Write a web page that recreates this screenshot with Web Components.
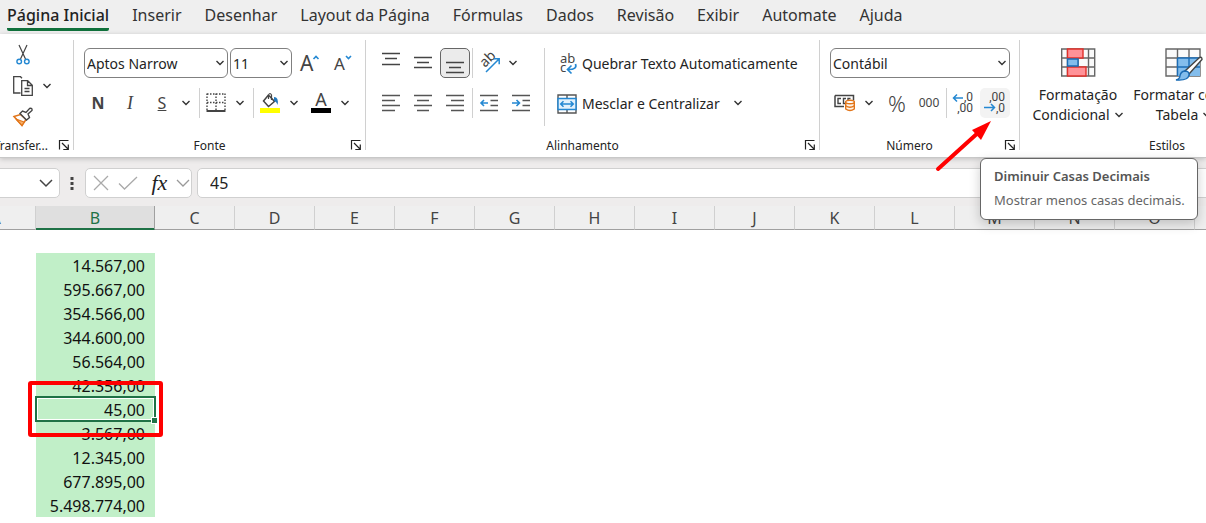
<!DOCTYPE html>
<html lang="pt-BR">
<head>
<meta charset="utf-8">
<title>Planilha</title>
<style>
html,body{margin:0;background:#fff;overflow-x:hidden}
body{font-family:"Noto Sans","Open Sans",sans-serif;font-size:14px;color:#242424;min-height:100vh}
</style>
</head>
<body>
<sheet-app></sheet-app>
<script>
const icons = {
  chev: [10,6,'<path d="M1.5 1l3.5 3.5L8.500 1" stroke="#333" stroke-width="1.400"/>'],
  chevwide: [14,8,'<path d="M1 1l6 6 6-6" stroke="#444" stroke-width="1.500"/>'],
  chevgray: [14,8,'<path d="M1 1l6 6 6-6" stroke="#999" stroke-width="1.300"/>'],
  launch: [10,10,'<path d="M.5 9.500V.5H9.500M3 3l6 6M9.300 4.500v5h-5" stroke="#222" stroke-width="1.200"/>'],
  cut: [14,20,'<path d="M3 0l6.500 14M11 0L4.500 14" stroke="#444" stroke-width="1.200"/><circle cx="3.200" cy="16.500" r="2.300" stroke="#2488d2" stroke-width="1.400"/><circle cx="10.800" cy="16.500" r="2.300" stroke="#2488d2" stroke-width="1.400"/>'],
  copy: [20,20,'<path d="M7.500 17H.7V.7H7.500l1.500 1.500M8.700 4.700h6l4.600 4.600v10H8.700zM14.500 5v4.500H19M11.500 12.500h5M11.500 15.500h5" stroke="#444" stroke-width="1.300"/>'],
  brush: [20,20,'<path d="M1 9.500l6.500-2L13 12.500 9 18.500z" fill="#fff" stroke="#e2761b" stroke-width="1.500"/><path d="M3 12l8 3-2 3.500z" fill="#f9b26b" stroke="#e2761b" stroke-width="1.200"/><path d="M7 6.500L9.500 4l3.500 1.500 3.500-4q3-1 2.500 2L15 7l1.500 3.500L13.500 13z" fill="#fff" stroke="#444" stroke-width="1.400"/>'],
  grow: [20,18,'<text x="0" y="17" font-size="21" fill="#444">A</text><path d="M13.500 5l2.500-2.500L18.500 5" stroke="#2488d2" stroke-width="1.600"/>'],
  shrink: [20,18,'<text x="0" y="16" font-size="17" fill="#444">A</text><path d="M12 2l2.500 2.500L17 2" stroke="#2488d2" stroke-width="1.600"/>'],
  borders: [20,20,'<path d="M1 1h18M1 9.500h18M1 .5v17M10 .5v17M19 .5v17" stroke="#444" stroke-width="1.400" stroke-dasharray="1.500 1.500"/><path d="M.5 18h19" stroke="#444" stroke-width="2"/>'],
  fill: [20,20,'<path d="M8.500 2L3.500 8l5 5.500 6-5L9 2.500" stroke="#444" stroke-width="1.500"/><path d="M8.500 6V2q1.500-3 3 0v5" stroke="#444" stroke-width="1.200"/><path d="M14 4q5 0 3.500 8-1-3.500-3.500-4z" fill="#2278bd"/><path d="M0 15h20v5H0z" fill="#ff0"/>'],
  fontcolor: [20,20,'<text x="10" y="13" text-anchor="middle" font-size="18" fill="#444">A</text><path d="M0 15h20v5H0z" fill="#000"/>'],
  vtop: [18,20,'<path d="M0 .5h18M3 5.500h12M0 11.500h18" stroke="#444" stroke-width="1.500"/>'],
  vmid: [18,20,'<path d="M0 4.500h18M3 9.500h12M0 14.500h18" stroke="#444" stroke-width="1.500"/>'],
  vbot: [18,20,'<path d="M0 9.500h18M3 14.500h12M0 19.500h18" stroke="#444" stroke-width="1.500"/>'],
  left: [18,18,'<path d="M0 1.500h18M0 6.500h13M0 11.500h18M0 16.500h13" stroke="#555" stroke-width="1.500"/>'],
  center: [18,18,'<path d="M0 1.500h18M3 6.500h12M0 11.500h18M3 16.500h12" stroke="#555" stroke-width="1.500"/>'],
  right: [18,18,'<path d="M0 1.500h18M5 6.500h13M0 11.500h18M5 16.500h13" stroke="#555" stroke-width="1.500"/>'],
  orient: [20,20,'<text x="0" y="0" font-size="14" fill="#444" transform="translate(6 15) rotate(-45)">ab</text><path d="M7 19L20 6M14.500 5.700h5.700v5.500" stroke="#2488d2" stroke-width="1.500"/>'],
  outdent: [18,18,'<path d="M0 1.500h18M10.500 6.500H18M10.500 11.500H18M0 16.500h18" stroke="#555" stroke-width="1.500"/><path d="M8 9H1.500M4 6L1 9l3 3" stroke="#2488d2" stroke-width="1.600"/>'],
  indent: [18,18,'<path d="M0 1.500h18M10.500 6.500H18M10.500 11.500H18M0 16.500h18" stroke="#555" stroke-width="1.500"/><path d="M0 9h7M4.500 6l3 3-3 3" stroke="#2488d2" stroke-width="1.600"/>'],
  wrap: [20,20,'<text x="3" y="9" font-size="13" fill="#444">ab<tspan x="3" y="18">c</tspan></text><path d="M18.500 10q2 5.500-7 5.500M14.500 11.500l-4 4 4 4" stroke="#2488d2" stroke-width="1.700"/>'],
  merge: [20,20,'<path d="M1 1h18v18H1zM10 1v4M10 15v4" stroke="#555" stroke-width="1.400"/><path d="M1 4.500h18v11H1z" fill="#e2f1fc" stroke="#2488d2" stroke-width="1.500"/><path d="M4 10h12M6.500 7.200L3.700 10l2.800 2.800M13.500 7.200l2.800 2.800-2.800 2.800" stroke="#2488d2" stroke-width="1.500"/>'],
  money: [22,18,'<path d="M1 1.500h18.500v5M1 1.500v11h9" stroke="#444" stroke-width="1.500"/><path d="M7 4.500H4v5h3M12 4.500H9.500v5H11M14 7V4.500h2.500" stroke="#444" stroke-width="1.400"/><path d="M11.700 8v7q4.300 3 8.600 0V8z" fill="#fff4e8" stroke="#e2761b" stroke-width="1.400"/><ellipse cx="16" cy="8" rx="4.300" ry="1.800" fill="#fff" stroke="#e2761b" stroke-width="1.400"/><path d="M11.700 11.700q4.300 3 8.600 0" stroke="#e2761b" stroke-width="1.400"/>'],
  more: [22,22,'<g font-family="Roboto" font-size="12" fill="#444"><text x="21" y="9" text-anchor="end">,0</text><text x="21" y="20" text-anchor="end">,00</text></g><path d="M11 6H1.500M5 2.500L1.500 6 5 9.500" stroke="#2488d2" stroke-width="1.500"/>'],
  less: [22,22,'<g font-family="Roboto" font-size="12" fill="#444"><text x="21" y="9" text-anchor="end">,00</text><text x="21" y="20" text-anchor="end">,0</text></g><path d="M0 15.500h10M7 12l3.500 3.500L7 19" stroke="#2488d2" stroke-width="1.500"/>'],
  cond: [34,30,'<path d="M.7 1h33v27H.7zM.7 10h33M.7 19h33M6.500 1v27M17 1v27M27.500 1v27" fill="#fafafa" stroke="#666" stroke-width="1.400"/><path d="M6.500 1h15.500v9H6.500zM6.500 19h18.500v9H6.500z" fill="#ff9298" stroke="#e0302a" stroke-width="1.400"/><path d="M6.500 11H17v7H6.500z" fill="#83bdec" stroke="#1b6cb5" stroke-width="1.400"/>'],
  table: [38,34,'<path d="M1 1h34v27H1zM1 10h34M1 19h34M12.500 1v27M24 1v27" fill="#fafafa" stroke="#666" stroke-width="1.400"/><path d="M12.500 10H35v18H12.500z" fill="#83bdec"/><path d="M12.500 10H35M12.500 19H35M12.500 10v18M24 10v18" stroke="#1b6cb5" stroke-width="1.400"/><path d="M34 10q3-2 3 1.500L24 26l-4-3z" fill="#fff" stroke="#444" stroke-width="1.400"/><path d="M19.500 23q5 0 4.500 4-1 6-13 5 4-1 4-4.500 1-4 4.500-4.500z" fill="#83bdec" stroke="#1b6cb5" stroke-width="1.400"/>'],
  cancel: [16,16,'<path d="M1 1l14 14M15 1L1 15" stroke="#aaa" stroke-width="1.300"/>'],
  ok: [20,14,'<path d="M1 7.500L6.500 13 19 1" stroke="#aaa" stroke-width="1.300"/>'],
  dots: [4,14,'<path d="M.5 1h3v3h-3zM.5 6h3v3h-3zM.5 11h3v3h-3z" fill="#444"/>']
};

class UiIcon extends HTMLElement {
  connectedCallback(){
    const [w,h,d] = icons[this.getAttribute('name')];
    this.attachShadow({mode:'open'}).innerHTML =
      `<style>:host{display:inline-flex;flex:none}svg{display:block;overflow:visible}</style>
       <svg width="${w}" height="${h}" viewBox="0 0 ${w} ${h}" fill="none" aria-hidden="true">${d}</svg>`;
  }
}

class RibbonButton extends HTMLElement {
  connectedCallback(){
    const label = this.getAttribute('label');
    this.attachShadow({mode:'open'}).innerHTML =
      `<style>
        :host{display:flex;flex:none;margin:0 1px;position:relative}
        button{all:unset;box-sizing:border-box;width:30px;height:30px;border-radius:5px;display:flex;align-items:center;justify-content:center;font-size:16px;line-height:20px;color:#444}
        :host([kind=chev]){margin:0}
        :host([kind=chev]) button{width:16px}
        :host([kind=text]){margin:0}
        :host([kind=text]) button{width:auto;font-size:14px;gap:5px;color:#242424;padding-top:1px}
        :host([pressed]) button{background:#ebebeb;border:1px solid #666}
        :host([hovered]) button{background:#f3f3f3}
      </style>
      <button type="button"${label?` aria-label="${label}"`:''}><slot></slot></button><slot name="tip"></slot>`;
  }
}

class BigButton extends HTMLElement {
  connectedCallback(){
    this.attachShadow({mode:'open'}).innerHTML =
      `<style>
        :host{display:block;flex:none}
        button{all:unset;display:flex;width:100%;flex-direction:column;align-items:center;font-size:14px;line-height:20px;white-space:nowrap}
        .icon{height:37px}
        .row{display:flex;align-items:center;gap:4px}
      </style>
      <button type="button"><span class="icon"><slot name="icon"></slot></span><span><slot name="top"></slot></span><span class="row"><slot></slot><ui-icon name="chev"></ui-icon></span></button>`;
  }
}

class UiSelect extends HTMLElement {
  connectedCallback(){
    this.attachShadow({mode:'open'}).innerHTML =
      `<style>
        :host{display:grid;flex:none;align-items:center}
        select{grid-area:1/1;appearance:none;box-sizing:border-box;width:100%;height:30px;margin:0;padding:0 20px 0 2px;border:1px solid #808080;border-radius:6px;background:#fff;font:inherit;font-size:14px;color:#242424}
        ui-icon{grid-area:1/1;justify-self:end;margin-right:3px;pointer-events:none}
      </style>
      <select aria-label="${this.getAttribute('label')}"><option>${this.getAttribute('value')}</option></select><ui-icon name="chev"></ui-icon>`;
  }
}

class RibbonGroup extends HTMLElement {
  connectedCallback(){
    const launcher = this.hasAttribute('launcher');
    this.attachShadow({mode:'open'}).innerHTML =
      `<style>
        :host{display:flex;flex:none;flex-direction:column;justify-content:space-between;box-sizing:border-box;min-height:110px;border-right:1px solid #d0d0d0}
        .body{padding-top:8px}
        :host([clipped]) .body{padding-top:0}
        footer{display:flex;align-items:center;height:10px;font-size:12px;line-height:16px}
        .name{flex:1;min-width:0;display:flex;justify-content:center;white-space:nowrap;padding-top:2px}
        :host([launcher]) footer{padding-right:4px}
        :host([launcher]) .name{margin-right:6px}
        :host([clipped]) .name{justify-content:flex-end;margin-right:11px}
        button{all:unset;display:flex}
      </style>
      <div class="body"><slot></slot></div>
      <footer><span class="name">${this.getAttribute('label')}</span>${launcher?'<button type="button" aria-label="Mais opções"><ui-icon name="launch"></ui-icon></button>':''}</footer>`;
  }
}

class RibbonTabs extends HTMLElement {
  connectedCallback(){
    const tabs=['Página Inicial','Inserir','Desenhar','Layout da Página','Fórmulas','Dados','Revisão','Exibir','Automate','Ajuda'];
    this.attachShadow({mode:'open'}).innerHTML =
      `<style>
        :host{display:block;background:#efefef}
        nav{display:flex;gap:23px;height:34px;padding-left:7px;box-sizing:border-box;white-space:nowrap}
        a{color:#333;text-decoration:none;font-size:16px;line-height:22px;padding-top:4px;height:24px}
        a.on{font-weight:500;color:#222;border-bottom:3px solid #0f703b;border-radius:0 0 2px 2px}
      </style>
      <nav>${tabs.map((t,i)=>`<a href="#"${i?'':' class="on" aria-current="page"'}>${t}</a>`).join('')}</nav>`;
  }
}

class ScreenTip extends HTMLElement {
  connectedCallback(){
    this.attachShadow({mode:'open'}).innerHTML =
      `<style>
        :host{display:block;position:absolute;top:70px;left:0;box-sizing:border-box;width:218px;padding:7px 13px 9px;background:#fff;border:1px solid #666;border-radius:6px;box-shadow:0 4px 12px rgba(0,0,0,.2);font-size:13px;line-height:20px;color:#666;white-space:nowrap;z-index:3}
        strong,span{display:block}
        strong{font-weight:600;color:#555}
        span{margin-top:4px}
      </style><strong><slot name="title"></slot></strong><span><slot></slot></span>`;
  }
}

class PointerArrow extends HTMLElement {
  connectedCallback(){
    this.attachShadow({mode:'open'}).innerHTML =
      `<style>:host{display:block;position:absolute;top:32px;right:18px;z-index:4;pointer-events:none}svg{display:block}</style>
      <svg width="58" height="52" viewBox="0 0 58 52" aria-hidden="true"><path d="M4 49L46 11" stroke="#f00" stroke-width="4" stroke-linecap="round"/><path d="M57 1L38 10l9 10z" fill="#f00"/></svg>`;
  }
}

class RibbonBar extends HTMLElement {
  connectedCallback(){
    const b=(n,l,x='')=>`<ribbon-button label="${l}" ${x}><ui-icon name="${n}"></ui-icon></ribbon-button>`;
    const c=l=>`<ribbon-button kind="chev" label="${l}"><ui-icon name="chev"></ui-icon></ribbon-button>`;
    this.attachShadow({mode:'open'}).innerHTML =
      `<style>
        :host{display:flex;background:#fff;padding:6px 0 7px;border-bottom:1px solid #c8c8c8;box-shadow:0 1px 5px rgba(0,0,0,.2);position:relative;z-index:2}
        .row{display:flex;align-items:center;height:30px}
        .stack{display:flex;flex-direction:column;gap:10px}
        .clip{display:flex;flex-direction:column;gap:1px;padding-left:7px}
        i.sep{flex:none;width:1px;height:30px;background:#d0d0d0;margin-left:5px}
        i.near{margin-left:1px}
        i.tall{height:78px;margin-left:7px}
        .clipboard{width:74px}
        .font{width:292px}
        .font .stack{padding-left:8px}
        .font .top{padding-left:2px;gap:2px}
        .name{width:144px}.size{width:62px}
        .align{width:454px}
        .align .cols{display:flex;padding-left:9px}
        .align .text{padding-left:12px}
        .num{width:200px}
        .num .stack{padding-left:9px}
        .format{width:180px;margin-left:1px}
        .gap{margin-left:4px}
        .gap.wide{margin-left:5px}
        .styles{width:295px}
        .styles .big{display:flex;padding-left:6px}
        .cf{width:104px}.ft{width:108px}
        .more{margin-left:10px}
        b{font-weight:700}
        .it{font-family:"Liberation Serif",serif;font-style:italic;font-size:18px}
        .pct{font-size:22px;font-weight:300}.mil{font-size:12px}
      </style>
      <ribbon-group class="clipboard" label="Transfer..." launcher clipped>
        <div class="clip"><div class="row">${b('cut','Recortar')}</div><div class="row">${b('copy','Copiar')}${c('Opções de cópia')}</div><div class="row">${b('brush','Pincel de formatação')}</div></div>
      </ribbon-group>
      <ribbon-group class="font" label="Fonte" launcher>
        <div class="stack">
          <div class="row top"><ui-select class="name" label="Nome da fonte" value="Aptos Narrow"></ui-select><ui-select class="size" label="Tamanho da fonte" value="11"></ui-select>${b('grow','Aumentar fonte')}${b('shrink','Diminuir fonte')}</div>
          <div class="row"><ribbon-button><b>N</b></ribbon-button><ribbon-button><span class="it">I</span></ribbon-button><ribbon-button><u>S</u></ribbon-button>${c('Sublinhado')}<i class="sep"></i>${b('borders','Bordas')}${c('Opções de bordas')}<i class="sep"></i>${b('fill','Cor de preenchimento')}${c('Cores de preenchimento')}<ribbon-button class="gap" label="Cor da fonte"><ui-icon name="fontcolor"></ui-icon></ribbon-button>${c('Cores da fonte')}</div>
        </div>
      </ribbon-group>
      <ribbon-group class="align" label="Alinhamento" launcher>
        <div class="cols">
          <div class="stack">
            <div class="row">${b('vtop','Alinhar em cima')}${b('vmid','Alinhar no meio')}${b('vbot','Alinhar embaixo','pressed')}<i class="sep near"></i>${b('orient','Orientação')}${c('Opções de orientação')}</div>
            <div class="row">${b('left','Alinhar à esquerda')}${b('center','Centralizar')}${b('right','Alinhar à direita')}<i class="sep near"></i>${b('outdent','Diminuir recuo')}${b('indent','Aumentar recuo')}</div>
          </div>
          <i class="sep tall"></i>
          <div class="stack text">
            <div class="row"><ribbon-button kind="text"><ui-icon name="wrap"></ui-icon>Quebrar Texto Automaticamente</ribbon-button></div>
            <div class="row"><ribbon-button kind="text"><ui-icon name="merge"></ui-icon>Mesclar e Centralizar</ribbon-button><ribbon-button class="more" kind="chev" label="Opções de mesclagem"><ui-icon name="chev"></ui-icon></ribbon-button></div>
          </div>
        </div>
      </ribbon-group>
      <ribbon-group class="num" label="Número" launcher>
        <div class="stack">
          <div class="row"><ui-select class="format" label="Formato de número" value="Contábil"></ui-select></div>
          <div class="row">${b('money','Formato de contabilização')}${c('Moedas')}<ribbon-button class="gap wide"><span class="pct">%</span></ribbon-button><ribbon-button><span class="mil">000</span></ribbon-button><i class="sep near"></i>${b('more','Aumentar casas decimais')}
            <ribbon-button hovered label="Diminuir casas decimais"><ui-icon name="less"></ui-icon><screen-tip slot="tip"><span slot="title">Diminuir Casas Decimais</span>Mostrar menos casas decimais.</screen-tip><pointer-arrow slot="tip"></pointer-arrow></ribbon-button></div>
        </div>
      </ribbon-group>
      <ribbon-group class="styles" label="Estilos">
        <div class="big"><big-button class="cf"><ui-icon slot="icon" name="cond"></ui-icon><span slot="top">Formatação</span>Condicional</big-button><big-button class="ft"><ui-icon slot="icon" name="table"></ui-icon><span slot="top">Formatar como</span>Tabela</big-button></div>
      </ribbon-group>`;
  }
}

class FormulaBar extends HTMLElement {
  connectedCallback(){
    this.attachShadow({mode:'open'}).innerHTML =
      `<style>
        :host{display:flex;align-items:center;padding:10px 0 8px;background:#eeecec}
        .box{box-sizing:border-box;height:30px;border:1px solid #d0d0d0;border-radius:5px;background:#fff;display:flex;align-items:center}
        .name{width:70px;margin-left:-10px;justify-content:flex-end;padding-right:6px}
        ui-icon.dots{margin:0 11px 0 10px}
        .tools{width:107px;justify-content:space-between;padding:0 1px 0 7px}
        button{all:unset;display:flex}
        .fx{font:italic 22px/24px "Liberation Serif",serif;color:#222;padding-left:5px}
        input{flex:1;min-width:0;margin:0 -8px 0 5px;padding:0 12px;font:inherit;font-size:16px;color:#222;outline:0}
      </style>
      <div class="box name"><button type="button" aria-label="Caixa de nome"><ui-icon name="chevwide"></ui-icon></button></div>
      <ui-icon class="dots" name="dots"></ui-icon>
      <div class="box tools"><button type="button" aria-label="Cancelar"><ui-icon name="cancel"></ui-icon></button><button type="button" aria-label="Inserir"><ui-icon name="ok"></ui-icon></button><button type="button" class="fx">fx</button><button type="button" aria-label="Mais funções"><ui-icon name="chevgray"></ui-icon></button></div>
      <input class="box" type="text" aria-label="Barra de fórmulas" value="45">`;
  }
}

class SheetGrid extends HTMLElement {
  connectedCallback(){
    const cols='ABCDEFGHIJKLMNOP'.split('');
    const vals=['14.567,00','595.667,00','354.566,00','344.600,00','56.564,00','42.356,00','45,00','3.567,00','12.345,00','677.895,00','5.498.774,00'];
    const rest='<td></td>'.repeat(cols.length-2);
    this.attachShadow({mode:'open'}).innerHTML =
      `<style>
        :host{display:block;overflow:hidden}
        table{border-collapse:separate;border-spacing:0;table-layout:fixed;width:1319px;margin-left:-44px}
        col{width:80px}col.b{width:119px}
        th{box-sizing:border-box;height:24px;padding:0;font-size:16px;line-height:20px;font-weight:400;color:#444;background:#efefef;border-right:1px solid #d0d0d0;border-bottom:1px solid #a0a0a0}
        th.on{background:#dfdfdf;color:#1f7246;border-bottom-color:#1f7246;box-shadow:inset 0 -1px #1f7246;border-right-color:#a0a0a0}
        td{box-sizing:border-box;height:24px;padding:2px 0 0;font-size:16px;line-height:22px;text-align:right;color:#111}
        tr.blank td{height:23px;padding:0}
        td.v{background:#c1efc8;padding-right:10px}
        td.sel{position:relative}
        .cursor{position:absolute;inset:-1px;border:2px solid #1f7246;box-shadow:inset 0 0 0 1px #fff}
        .cursor::after{content:"";position:absolute;right:-4px;bottom:-4px;width:5px;height:5px;background:#1f7246;border:1px solid #fff}
        .mark{position:absolute;inset:-16px -8px;border:4px solid #f00;border-radius:3px;z-index:1}
      </style>
      <table><colgroup>${cols.map(c=>`<col${c=='B'?' class="b"':''}>`).join('')}</colgroup>
      <thead><tr>${cols.map(c=>`<th scope="col"${c=='B'?' class="on"':''}>${c}</th>`).join('')}</tr></thead>
      <tbody><tr class="blank"><td></td><td></td>${rest}</tr>
      ${vals.map((v,i)=>`<tr><td></td><td class="v${i==6?' sel':''}">${v}${i==6?'<div class="cursor"></div><div class="mark"></div>':''}</td>${rest}</tr>`).join('')}
      </tbody></table>`;
  }
}

class SheetApp extends HTMLElement {
  connectedCallback(){
    this.attachShadow({mode:'open'}).innerHTML =
      `<style>:host{display:block;overflow:hidden}</style>
      <ribbon-tabs></ribbon-tabs><ribbon-bar></ribbon-bar><formula-bar></formula-bar><sheet-grid></sheet-grid>`;
  }
}

[['ui-icon',UiIcon],['ribbon-button',RibbonButton],['big-button',BigButton],['ui-select',UiSelect],['ribbon-group',RibbonGroup],['ribbon-tabs',RibbonTabs],['screen-tip',ScreenTip],['pointer-arrow',PointerArrow],['ribbon-bar',RibbonBar],['formula-bar',FormulaBar],['sheet-grid',SheetGrid],['sheet-app',SheetApp]].forEach(([n,k])=>customElements.define(n,k));
</script>
</body>
</html>
